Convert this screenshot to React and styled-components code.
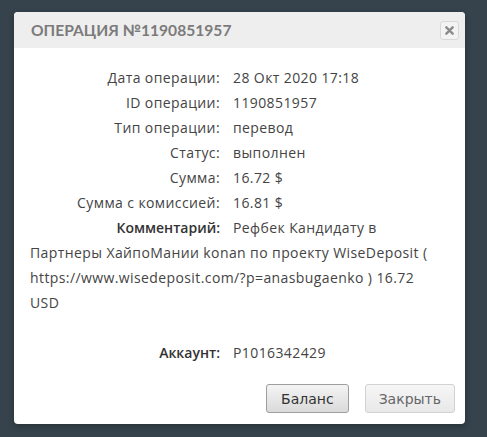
import styled, { createGlobalStyle } from "styled-components";

const GlobalStyle = createGlobalStyle`
html, body {
margin:0;
padding:0;
background:#36434c;
}
body {
font-family:"Open Sans", "Noto Sans", sans-serif;
}
`

const Page = styled.div`
width:487px;
height:437px;
padding:12px 22px 0 14px;
box-sizing:border-box;
`
const Modal = styled.div`
background:#fff;
border-radius:4px;
overflow:hidden;
box-shadow:0 2px 6px rgba(0,0,0,.3);
`
const Header = styled.div`
display:flex;
align-items:center;
justify-content:space-between;
height:36px;
padding:0 6px 0 17px;
background:#eeeeee;
`
const Title = styled.h3`
margin:0;
font-family:Lato, "Open Sans", sans-serif;
font-weight:700;
font-size:15.6px;
color:#7b7b7b;
text-transform:uppercase;
`
const CloseButton = styled.button`
width:19px;
height:19px;
padding:0;
display:flex;
align-items:center;
justify-content:center;
background:#f3f3f3;
border:1px solid #d8d8d8;
border-radius:3px;
cursor:pointer;
`
const Body = styled.div`
padding:17px 24px 0 16px;
font-size:14px;
line-height:25px;
letter-spacing:0.4px;
color:#444;
`
const Row = styled.div`
margin-top:${props => props.gapTop || "0"};
`
const Label = styled.span`
display:inline-block;
width:190px;
margin-right:13px;
text-align:right;
letter-spacing:${props => props.strong ? "0" : "0.4px"};
font-weight:${props => props.strong ? 600 : 400};
color:${props => props.strong ? "#333" : "#444"};
`
const Footer = styled.div`
display:flex;
justify-content:flex-end;
gap:16px;
padding:19px 10px 11px 0;
`
const Button = styled.button`
height:29px;
padding:0 ${props => props.pad || "14px"};
font-family:"DejaVu Sans", sans-serif;
font-size:14px;
color:${props => props.primary ? "#333" : "#666"};
background:${props => props.primary
   ? "linear-gradient(#f4f4f4, #dadada)"
   : "linear-gradient(#f6f6f6, #e8e8e8)"};
border:1px solid ${props => props.primary ? "#9e9e9e" : "#d2d2d2"};
border-radius:3px;
cursor:pointer;
`

const rows = [
   ["Дата операции:", "28 Окт 2020 17:18"],
   ["ID операции:", "1190851957"],
   ["Тип операции:", "перевод"],
   ["Статус:", "выполнен"],
   ["Сумма:", "16.72 $"],
   ["Сумма с комиссией:", "16.81 $"],
]

export default function App() {
   return (
      <Page>
         <GlobalStyle />
         <Modal>
            <Header>
               <Title>Операция №1190851957</Title>
               <CloseButton aria-label="close">
                  <svg width="9" height="9" viewBox="0 0 10 10">
                     <path d="M1.5 1.5 L8.5 8.5 M8.5 1.5 L1.5 8.5" stroke="#8a8a8a" strokeWidth="2.6" strokeLinecap="round" />
                  </svg>
               </CloseButton>
            </Header>
            <Body>
               {rows.map(([label, value]) => (
                  <Row key={label}>
                     <Label>{label}</Label>{value}
                  </Row>
               ))}
               <Row>
                  <Label strong>Комментарий:</Label>
                  Рефбек Кандидату в Партнеры ХайпоМании konan по проекту WiseDeposit ( https://www.wisedeposit.com/?p=anasbugaenko ) 16.72 USD
               </Row>
               <Row gapTop="25px">
                  <Label strong>Аккаунт:</Label>P1016342429
               </Row>
            </Body>
            <Footer>
               <Button primary>Баланс</Button>
               <Button pad="13px">Закрыть</Button>
            </Footer>
         </Modal>
      </Page>
   )
}
